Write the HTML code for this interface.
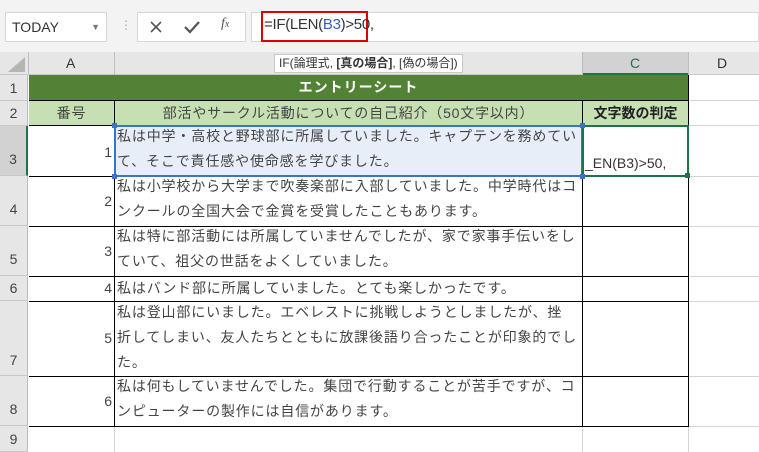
<!DOCTYPE html><html><head><meta charset="utf-8"><style>
*{margin:0;padding:0;box-sizing:border-box}
body{width:759px;height:452px;overflow:hidden;background:#fff;font-family:"Liberation Sans","Noto Sans CJK JP",sans-serif;position:relative;color:#333}
.a{position:absolute}
.hl{position:absolute;background:#d4d4d4}
.t{position:absolute;font-size:14px;color:#444;white-space:nowrap;line-height:25px;letter-spacing:0.85px}
.rh{position:absolute;left:0;width:28px;background:#e6e6e6;border-bottom:1px solid #c8c8c8;border-right:1px solid #bdbdbd;font-size:14px;color:#444;text-align:center}
.bl{position:absolute;background:#000}
</style></head><body>
<div class="a" style="left:0;top:0;width:759px;height:52px;background:#f3f3f3"></div>
<div class="a" style="left:5px;top:12px;width:102px;height:30px;background:#fff;border:1px solid #d6d6d6;font-size:14px;line-height:28px;padding-left:6px;color:#333">TODAY<span style="position:absolute;right:6px;top:0;font-size:9px;color:#777">▼</span></div>
<div class="a" style="left:120px;top:18px;color:#aaa;font-size:12px">⋮</div>
<div class="a" style="left:137px;top:12px;width:109px;height:30px;background:#fff;border:1px solid #d6d6d6"></div>
<svg class="a" style="left:148px;top:19px" width="16" height="16"><path d="M3 3L13 13M13 3L3 13" stroke="#555" stroke-width="1.6"/></svg>
<svg class="a" style="left:183px;top:19px" width="18" height="16"><path d="M2 8L7 13L16 3" stroke="#555" stroke-width="2.2" fill="none"/></svg>
<div class="a" style="left:221px;top:16px;font-size:14px;color:#555;font-style:italic;font-family:'Liberation Serif',serif"><i>f</i><span style="font-size:10px">x</span></div>
<div class="a" style="left:251px;top:12px;width:508px;height:30px;background:#fff;border:1px solid #d6d6d6"></div>
<div class="a" style="left:261px;top:11px;width:107px;height:31px;border:2px solid #e00000"></div>
<div class="a" style="left:264px;top:16px;font-size:15px;color:#333;letter-spacing:-0.3px">=IF(LEN(<span style="color:#3060c0">B3</span>)&gt;50,</div>
<div class="a" style="left:0;top:52px;width:759px;height:23px;background:#e6e6e6;border-bottom:1px solid #c8c8c8"></div>
<div class="a" style="left:8px;top:57px;width:0;height:0;border-left:17px solid transparent;border-bottom:15px solid #b5b5b5"></div>
<div class="hl" style="left:28px;top:52px;width:1px;height:23px;background:#bdbdbd"></div>
<div class="hl" style="left:114px;top:52px;width:1px;height:23px;background:#bdbdbd"></div>
<div class="hl" style="left:582px;top:52px;width:1px;height:23px;background:#bdbdbd"></div>
<div class="hl" style="left:688px;top:52px;width:1px;height:23px;background:#bdbdbd"></div>
<div class="a" style="left:583px;top:52px;width:105px;height:23px;background:#d2d2d2;border-bottom:2px solid #217346"></div>
<div class="a" style="left:66px;top:55px;font-size:14px;color:#333">A</div>
<div class="a" style="left:630px;top:55px;font-size:14px;color:#217346">C</div>
<div class="a" style="left:717px;top:55px;font-size:14px;color:#333">D</div>
<div class="a" style="left:274px;top:54px;height:19px;padding:0 4px;background:#fff;border:1px solid #c8c8c8;font-size:12px;line-height:17px;color:#333">IF(論理式, <b>[真の場合]</b>, [偽の場合])</div>
<div class="rh" style="top:75px;height:26px;line-height:26px">1</div>
<div class="rh" style="top:101px;height:25px;line-height:25px">2</div>
<div class="rh" style="top:126px;height:50px;line-height:66px;background:#d2d2d2;border-right:2px solid #217346">3</div>
<div class="rh" style="top:176px;height:50px;line-height:66px">4</div>
<div class="rh" style="top:226px;height:50px;line-height:66px">5</div>
<div class="rh" style="top:276px;height:25px;line-height:25px">6</div>
<div class="rh" style="top:301px;height:75px;line-height:118px">7</div>
<div class="rh" style="top:376px;height:50px;line-height:66px">8</div>
<div class="rh" style="top:426px;height:26px;line-height:26px">9</div>
<div class="hl" style="left:689px;top:100px;width:70px;height:1px"></div>
<div class="hl" style="left:689px;top:125px;width:70px;height:1px"></div>
<div class="hl" style="left:689px;top:176px;width:70px;height:1px"></div>
<div class="hl" style="left:689px;top:226px;width:70px;height:1px"></div>
<div class="hl" style="left:689px;top:276px;width:70px;height:1px"></div>
<div class="hl" style="left:689px;top:301px;width:70px;height:1px"></div>
<div class="hl" style="left:689px;top:376px;width:70px;height:1px"></div>
<div class="hl" style="left:689px;top:426px;width:70px;height:1px"></div>
<div class="hl" style="left:114px;top:427px;width:1px;height:25px"></div>
<div class="hl" style="left:582px;top:427px;width:1px;height:25px"></div>
<div class="hl" style="left:688px;top:427px;width:1px;height:25px"></div>
<div class="a" style="left:29px;top:75px;width:659px;height:25px;background:#538135"></div>
<div class="a" style="left:29px;top:75px;width:659px;text-align:center;color:#fff;font-weight:bold;font-size:14px;line-height:25px;letter-spacing:1px">エントリーシート</div>
<div class="a" style="left:29px;top:101px;width:659px;height:25px;background:#c6e0b4"></div>
<div class="t" style="left:29px;top:101px;width:85px;text-align:center">番号</div>
<div class="t" style="left:115px;top:101px;width:467px;text-align:center;letter-spacing:.8px">部活やサークル活動についての自己紹介（50文字以内）</div>
<div class="t" style="left:583px;top:101px;width:105px;text-align:center;font-weight:bold;color:#222;letter-spacing:0">文字数の判定</div>
<div class="a" style="left:115px;top:126px;width:467px;height:50px;background:#e8eef8"></div>
<div class="bl" style="left:29px;top:100px;width:659px;height:1px"></div>
<div class="bl" style="left:29px;top:125px;width:659px;height:1px"></div>
<div class="bl" style="left:29px;top:176px;width:659px;height:1px"></div>
<div class="bl" style="left:29px;top:226px;width:659px;height:1px"></div>
<div class="bl" style="left:29px;top:276px;width:659px;height:1px"></div>
<div class="bl" style="left:29px;top:301px;width:659px;height:1px"></div>
<div class="bl" style="left:29px;top:376px;width:659px;height:1px"></div>
<div class="bl" style="left:29px;top:426px;width:659px;height:1px"></div>
<div class="bl" style="left:114px;top:101px;width:1px;height:326px"></div>
<div class="bl" style="left:582px;top:101px;width:1px;height:326px"></div>
<div class="bl" style="left:688px;top:75px;width:1px;height:352px"></div>
<div class="a" style="left:114px;top:125px;width:469px;height:52px;border:2px solid #3b73c8"></div>
<div class="a" style="left:112px;top:123px;width:5px;height:5px;background:#3b73c8"></div>
<div class="a" style="left:112px;top:174px;width:5px;height:5px;background:#3b73c8"></div>
<div class="a" style="left:582px;top:125px;width:107px;height:52px;border:2px solid #217346;background:#fff"></div>
<div class="a" style="left:685px;top:173px;width:5px;height:5px;background:#217346"></div>
<div class="a" style="left:580px;top:123px;width:5px;height:5px;background:#3b73c8"></div>
<div class="a" style="left:580px;top:174px;width:5px;height:5px;background:#3b73c8"></div>
<div class="a" style="left:585px;top:151px;font-size:14px;color:#333;line-height:25px">_EN(B3)&gt;50,</div>
<div class="t" style="left:29px;top:140px;width:83px;text-align:right;letter-spacing:0">1</div>
<div class="t" style="left:29px;top:189px;width:83px;text-align:right;letter-spacing:0">2</div>
<div class="t" style="left:29px;top:239px;width:83px;text-align:right;letter-spacing:0">3</div>
<div class="t" style="left:29px;top:276px;width:83px;text-align:right;letter-spacing:0">4</div>
<div class="t" style="left:29px;top:326px;width:83px;text-align:right;letter-spacing:0">5</div>
<div class="t" style="left:29px;top:389px;width:83px;text-align:right;letter-spacing:0">6</div>
<div class="t" style="left:117px;top:124px">私は中学・高校と野球部に所属していました。キャプテンを務めてい<br>て、そこで責任感や使命感を学びました。</div>
<div class="t" style="left:117px;top:174px">私は小学校から大学まで吹奏楽部に入部していました。中学時代はコ<br>ンクールの全国大会で金賞を受賞したこともあります。</div>
<div class="t" style="left:117px;top:224px">私は特に部活動には所属していませんでしたが、家で家事手伝いをし<br>ていて、祖父の世話をよくしていました。</div>
<div class="t" style="left:117px;top:276px">私はバンド部に所属していました。とても楽しかったです。</div>
<div class="t" style="left:117px;top:300px">私は登山部にいました。エベレストに挑戦しようとしましたが、挫<br>折してしまい、友人たちとともに放課後語り合ったことが印象的でし<br>た。</div>
<div class="t" style="left:117px;top:374px">私は何もしていませんでした。集団で行動することが苦手ですが、コ<br>ンピューターの製作には自信があります。</div>
</body></html>
